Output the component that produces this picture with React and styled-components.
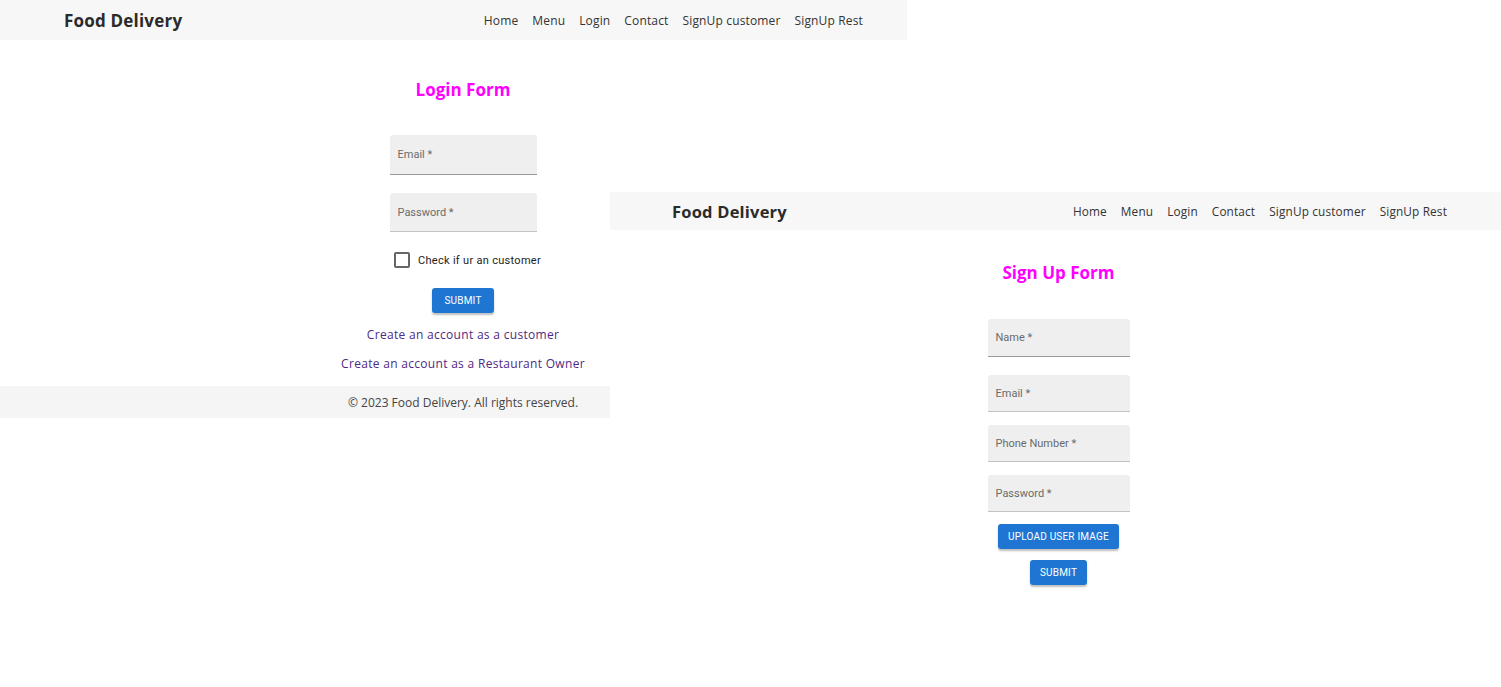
import styled, { createGlobalStyle } from "styled-components"

const GlobalStyle = createGlobalStyle`
    body {
        margin: 0;
        background: #ffffff;
        font-family: "Open Sans", "DejaVu Sans", sans-serif;
    }
`

const Desktop = styled.div`
    position: relative;
    width: 1501px;
    height: 687px;
    overflow: hidden;
    background: #ffffff;
`

const Window = styled.div`
    position: absolute;
    left: ${props => props.x}px;
    top: ${props => props.y}px;
    width: ${props => props.w}px;
    height: ${props => props.h}px;
    background: #ffffff;
    display: flex;
    flex-direction: column;
`

const Navbar = styled.nav`
    height: ${props => props.h}px;
    background: #f7f7f7;
    display: flex;
    align-items: center;
    justify-content: space-between;
    padding: 0 ${props => props.right}px 0 ${props => props.left}px;
    flex-shrink: 0;
`

const Brand = styled.div`
    font-size: ${props => props.size}px;
    font-weight: 700;
    color: #2b2b2b;
    letter-spacing: 0.2px;
`

const NavLinks = styled.div`
    display: flex;
    gap: ${props => props.gap}px;
`

const NavLink = styled.a`
    font-size: ${props => props.size}px;
    letter-spacing: 0.15px;
    color: #333333;
    text-decoration: none;
`

const Main = styled.main`
    display: flex;
    flex-direction: column;
    align-items: center;
    padding-left: ${props => props.shift || 0}px;
    padding-top: ${props => props.top}px;
    flex: 1;
`

const Title = styled.h2`
    margin: 0;
    font-size: 17px;
    font-weight: 700;
    color: #ff00ff;
    line-height: 22px;
`

const Field = styled.div`
    width: ${props => props.w}px;
    height: ${props => props.h}px;
    box-sizing: border-box;
    margin-top: ${props => props.mt}px;
    background: #efefef;
    border-radius: 3px 3px 0 0;
    border-bottom: 1px solid ${props => props.dark ? "#9a9a9a" : "#c4c4c4"};
    display: flex;
    align-items: center;
    padding-left: 8px;
    font-family: Roboto, "Liberation Sans", sans-serif;
    font-size: 11px;
    color: #6b6b6b;
`

const CheckRow = styled.label`
    display: flex;
    align-items: center;
    gap: 8px;
    margin-top: 20px;
    margin-left: 9px;
    font-family: Roboto, "Liberation Sans", sans-serif;
    font-size: 11px;
    letter-spacing: 0.3px;
    color: #222222;
`

const Box = styled.span`
    width: 12px;
    height: 12px;
    border: 2px solid #666666;
    border-radius: 2px;
`

const Button = styled.button`
    margin-top: ${props => props.mt}px;
    height: 25px;
    padding: 0 ${props => props.px}px;
    border: none;
    border-radius: 3px;
    background: #1f76d2;
    color: #ffffff;
    font-family: Roboto, "Liberation Sans", sans-serif;
    font-size: 10px;
    font-weight: 400;
    letter-spacing: 0.2px;
    box-shadow: 0 2px 2px rgba(0, 0, 0, 0.25);
`

const TextLink = styled.a`
    margin-top: ${props => props.mt}px;
    font-size: 12px;
    letter-spacing: 0.3px;
    color: #4e2a84;
    text-decoration: none;
    line-height: 16px;
`

const Footer = styled.footer`
    height: 32px;
    background: #f5f5f5;
    display: flex;
    align-items: center;
    justify-content: center;
    padding-left: 19px;
    font-size: 12px;
    color: #444444;
`

const links = ["Home", "Menu", "Login", "Contact", "SignUp customer", "SignUp Rest"]

const Nav = ({ h, left, right, brand, size, gap }) => (
  <Navbar h={h} left={left} right={right}>
    <Brand size={brand}>Food Delivery</Brand>
    <NavLinks gap={gap}>
      {links.map(l => <NavLink key={l} size={size}>{l}</NavLink>)}
    </NavLinks>
  </Navbar>
)

const App = () => {
  return (
    <Desktop>
      <GlobalStyle />
      <Window x={0} y={0} w={907} h={418}>
        <Nav h={40} left={64} right={44} brand={17} size={12} gap={14} />
        <Main shift={19} top={39}>
          <Title>Login Form</Title>
          <Field w={147} h={40} mt={34} dark>Email *</Field>
          <Field w={147} h={39} mt={18}>Password *</Field>
          <CheckRow><Box />Check if ur an customer</CheckRow>
          <Button mt={20} px={12}>SUBMIT</Button>
          <TextLink mt={14}>Create an account as a customer</TextLink>
          <TextLink mt={13}>Create an account as a Restaurant Owner</TextLink>
        </Main>
        <Footer>© 2023 Food Delivery. All rights reserved.</Footer>
      </Window>
      <Window x={610} y={192} w={891} h={495}>
        <Nav h={38} left={62} right={54} brand={16.5} size={11.8} gap={14} />
        <Main shift={6} top={32}>
          <Title>Sign Up Form</Title>
          <Field w={142} h={38} mt={35} dark>Name *</Field>
          <Field w={142} h={37} mt={18}>Email *</Field>
          <Field w={142} h={37} mt={13}>Phone Number *</Field>
          <Field w={142} h={37} mt={13}>Password *</Field>
          <Button mt={12} px={10}>UPLOAD USER IMAGE</Button>
          <Button mt={11} px={10}>SUBMIT</Button>
        </Main>
      </Window>
    </Desktop>
  )
}

export default App
